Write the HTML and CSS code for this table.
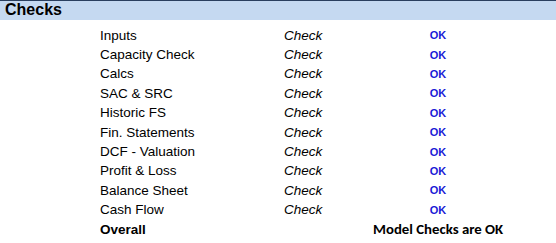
FILE: index.html
```html
<!DOCTYPE html>
<html>
<head>
<meta charset="utf-8">
<link rel="stylesheet" href="styles.css">
</head>
<body>
<div class="header">Checks</div>
<div class="checks">
  <div class="label">Inputs</div><div class="check">Check</div><div class="ok">OK</div>
  <div class="label">Capacity Check</div><div class="check">Check</div><div class="ok">OK</div>
  <div class="label">Calcs</div><div class="check">Check</div><div class="ok">OK</div>
  <div class="label">SAC &amp; SRC</div><div class="check">Check</div><div class="ok">OK</div>
  <div class="label">Historic FS</div><div class="check">Check</div><div class="ok">OK</div>
  <div class="label">Fin. Statements</div><div class="check">Check</div><div class="ok">OK</div>
  <div class="label">DCF - Valuation</div><div class="check">Check</div><div class="ok">OK</div>
  <div class="label">Profit &amp; Loss</div><div class="check">Check</div><div class="ok">OK</div>
  <div class="label">Balance Sheet</div><div class="check">Check</div><div class="ok">OK</div>
  <div class="label">Cash Flow</div><div class="check">Check</div><div class="ok">OK</div>
  <div class="label overall">Overall</div><div class="check"></div><div class="summary">Model Checks are OK</div>
</div>
</body>
</html>
```
FILE: styles.css
```css
html, body {
  margin: 0;
  padding: 0;
  background: #ffffff;
}
body {
  font-family: "Liberation Sans", Arial, sans-serif;
  color: #000;
}
.header {
  border-top: 1px solid #2a3f5f;
  height: 19px;
  background: #c5d9f1;
  font-weight: bold;
  font-size: 16px;
  line-height: 17px;
  padding-left: 5px;
}
.checks {
  display: grid;
  grid-template-columns: 184px 89px 130px;
  grid-auto-rows: 19.4px;
  padding-left: 100px;
  padding-top: 5.5px;
  align-items: center;
  font-size: 13.5px;
}
.check {
  font-style: italic;
}
.ok {
  text-align: center;
  color: #1a1ad6;
  font-weight: bold;
  font-size: 11px;
}
.overall {
  font-weight: bold;
}
.summary {
  text-align: center;
  white-space: nowrap;
  font-family: Carlito, "Open Sans", "Liberation Sans", sans-serif;
  font-weight: bold;
  font-size: 14.8px;
}
```
